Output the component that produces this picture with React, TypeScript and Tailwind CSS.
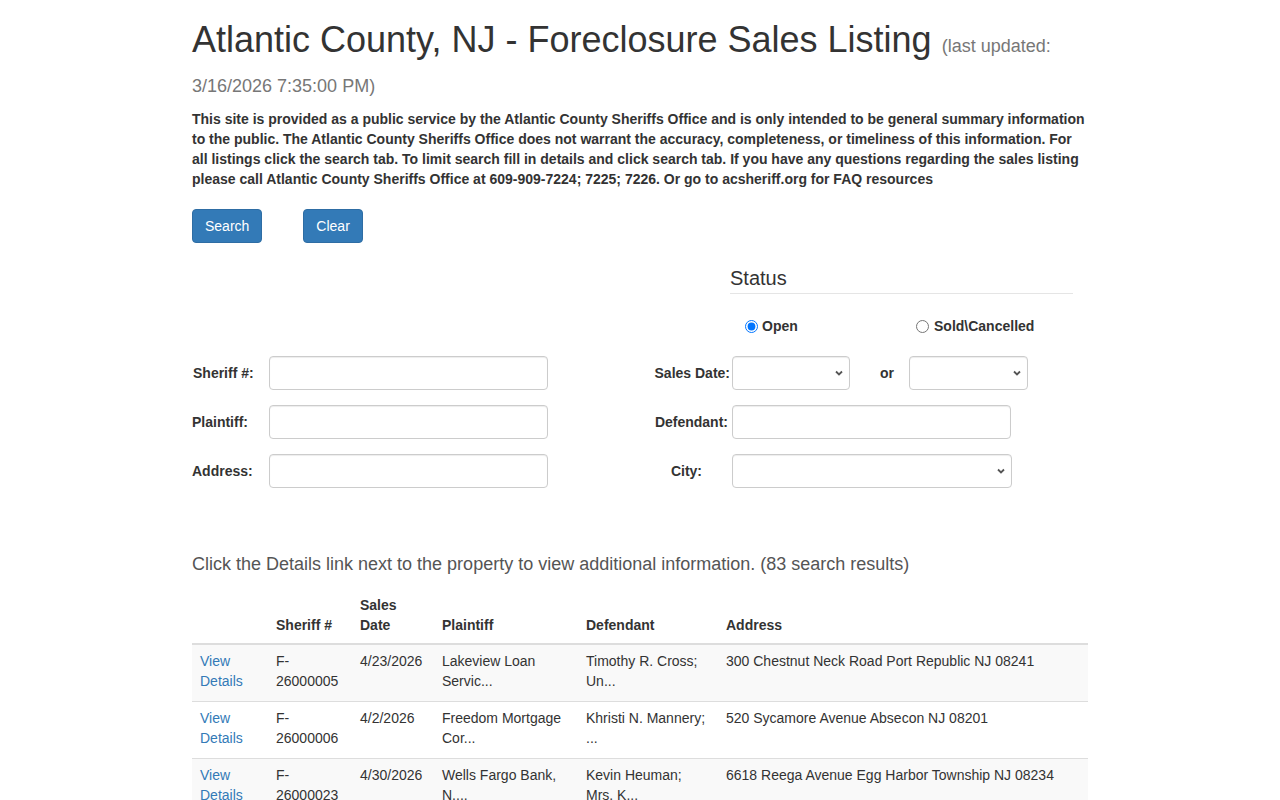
import React from "react";

type Listing = {
    sheriffNo: [string, string];
    salesDate: string;
    plaintiff: [string, string];
    defendant: [string, string];
    address: string;
};

const listings: Listing[] = [
    {
        sheriffNo: ["F-", "26000005"],
        salesDate: "4/23/2026",
        plaintiff: ["Lakeview Loan", "Servic..."],
        defendant: ["Timothy R. Cross;", "Un..."],
        address: "300 Chestnut Neck Road Port Republic NJ 08241",
    },
    {
        sheriffNo: ["F-", "26000006"],
        salesDate: "4/2/2026",
        plaintiff: ["Freedom Mortgage", "Cor..."],
        defendant: ["Khristi N. Mannery;", "..."],
        address: "520 Sycamore Avenue Absecon NJ 08201",
    },
    {
        sheriffNo: ["F-", "26000023"],
        salesDate: "4/30/2026",
        plaintiff: ["Wells Fargo Bank,", "N...."],
        defendant: ["Kevin Heuman;", "Mrs. K..."],
        address: "6618 Reega Avenue Egg Harbor Township NJ 08234",
    },
];

const inputClass =
    "h-[34px] rounded-[4px] border border-[#ccc] bg-white px-3 text-[14px] text-[#555] shadow-[inset_0_1px_1px_rgba(0,0,0,0.075)] outline-none";

function Chevron() {
    return (
        <svg
            className="pointer-events-none absolute right-[7px] top-1/2 -translate-y-1/2"
            width="8"
            height="6"
            viewBox="0 0 8 6"
        >
            <path d="M1 1.5 L4 4.5 L7 1.5" fill="none" stroke="#555" strokeWidth="1.8" />
        </svg>
    );
}

function SelectBox({ width }: { width: string }) {
    return (
        <div className={`relative ${width}`}>
            <select className={`${inputClass} w-full appearance-none`} defaultValue="">
                <option value=""></option>
            </select>
            <Chevron />
        </div>
    );
}

function App() {
    return (
        <div className="min-h-screen bg-white font-['Liberation_Sans',Arial,sans-serif] text-[14px] text-[#333]">
            <div className="mx-auto w-[896px]">

                <h1 className="mb-[9px] pt-[20px] text-[36px] font-normal leading-[40px] text-[#333]">
                    Atlantic County, NJ - Foreclosure Sales Listing{" "}
                    <small className="text-[18px] leading-none text-[#777]">(last updated: 3/16/2026 7:35:00 PM)</small>
                </h1>

                <p className="text-[14px] font-bold leading-5">
                    This site is provided as a public service by the Atlantic County Sheriffs Office and is only
                    intended to be general summary information to the public. The Atlantic County Sheriffs Office
                    does not warrant the accuracy, completeness, or timeliness of this information. For all listings
                    click the search tab. To limit search fill in details and click search tab. If you have any
                    questions regarding the sales listing please call Atlantic County Sheriffs Office at
                    609-909-7224; 7225; 7226. Or go to acsheriff.org for FAQ resources
                </p>

                <div className="mt-5 flex gap-[41px]">
                    <button className="h-[34px] rounded-[4px] border border-[#2e6da4] bg-[#337ab7] px-3 text-[14px] text-white">
                        Search
                    </button>
                    <button className="h-[34px] rounded-[4px] border border-[#2e6da4] bg-[#337ab7] px-3 text-[14px] text-white">
                        Clear
                    </button>
                </div>

                {/* status */}
                <div className="ml-[538px] mt-[23px] w-[343px]">
                    <h3 className="border-b border-[#e5e5e5] pb-[3px] text-[20px] leading-6 text-[#333]">Status</h3>
                    <div className="mt-[22px] flex h-5 items-center font-bold">
                        <label className="flex w-[171px] items-center pl-[15px]">
                            <input type="radio" name="status" defaultChecked className="m-0 h-[13px] w-[13px]" />
                            <span className="ml-[4px]">Open</span>
                        </label>
                        <label className="flex items-center pl-[15px]">
                            <input type="radio" name="status" className="m-0 h-[13px] w-[13px]" />
                            <span className="ml-[5px]">Sold\Cancelled</span>
                        </label>
                    </div>
                </div>

                {/* search fields */}
                <div className="mt-[20px] flex flex-col gap-[15px] font-bold">
                    <div className="flex items-center">
                        <label className="w-[77px] pl-px">Sheriff #:</label>
                        <input className={`${inputClass} w-[279px]`} />
                        <label className="w-[184px] pr-[2px] text-right">Sales Date:</label>
                        <SelectBox width="w-[118px]" />
                        <span className="pl-[30px] pr-[15px]">or</span>
                        <SelectBox width="w-[119px]" />
                    </div>
                    <div className="flex items-center">
                        <label className="w-[77px]">Plaintiff:</label>
                        <input className={`${inputClass} w-[279px]`} />
                        <label className="w-[184px] pr-[4px] text-right">Defendant:</label>
                        <input className={`${inputClass} w-[279px]`} />
                    </div>
                    <div className="flex items-center">
                        <label className="w-[77px]">Address:</label>
                        <input className={`${inputClass} w-[279px]`} />
                        <label className="w-[184px] pr-[30px] text-right">City:</label>
                        <SelectBox width="w-[280px]" />
                    </div>
                </div>

                <p className="mt-[63px] text-[18px] leading-[26px] text-[#555]">
                    Click the Details link next to the property to view additional information. (83 search results)
                </p>

                <table className="mt-[10px] w-full table-fixed border-collapse text-left">
                    <colgroup>
                        <col className="w-[76px]" />
                        <col className="w-[84px]" />
                        <col className="w-[82px]" />
                        <col className="w-[144px]" />
                        <col className="w-[140px]" />
                        <col />
                    </colgroup>
                    <thead>
                        <tr className="border-b-2 border-[#ddd] align-bottom font-bold">
                            <th className="p-2 leading-5"></th>
                            <th className="p-2 leading-5">Sheriff #</th>
                            <th className="p-2 leading-5">Sales<br />Date</th>
                            <th className="p-2 leading-5">Plaintiff</th>
                            <th className="p-2 leading-5">Defendant</th>
                            <th className="p-2 leading-5">Address</th>
                        </tr>
                    </thead>
                    <tbody>
                        {listings.map(function (row, index) {
                            return (
                                <tr
                                    key={row.sheriffNo[1]}
                                    className={`border-t border-[#ddd] align-top ${index % 2 === 0 ? "bg-[#f9f9f9]" : "bg-white"}`}
                                >
                                    <td className="whitespace-nowrap px-2 pb-[10px] pt-[6px] leading-5">
                                        <a href="#" className="text-[#337ab7]">View<br />Details</a>
                                    </td>
                                    <td className="whitespace-nowrap px-2 pb-[10px] pt-[6px] leading-5">
                                        {row.sheriffNo[0]}<br />{row.sheriffNo[1]}
                                    </td>
                                    <td className="whitespace-nowrap px-2 pb-[10px] pt-[6px] leading-5">{row.salesDate}</td>
                                    <td className="whitespace-nowrap px-2 pb-[10px] pt-[6px] leading-5">
                                        {row.plaintiff[0]}<br />{row.plaintiff[1]}
                                    </td>
                                    <td className="whitespace-nowrap px-2 pb-[10px] pt-[6px] leading-5">
                                        {row.defendant[0]}<br />{row.defendant[1]}
                                    </td>
                                    <td className="whitespace-nowrap px-2 pb-[10px] pt-[6px] leading-5">{row.address}</td>
                                </tr>
                            );
                        })}
                    </tbody>
                </table>

            </div>
        </div>
    );
}

export default App;
